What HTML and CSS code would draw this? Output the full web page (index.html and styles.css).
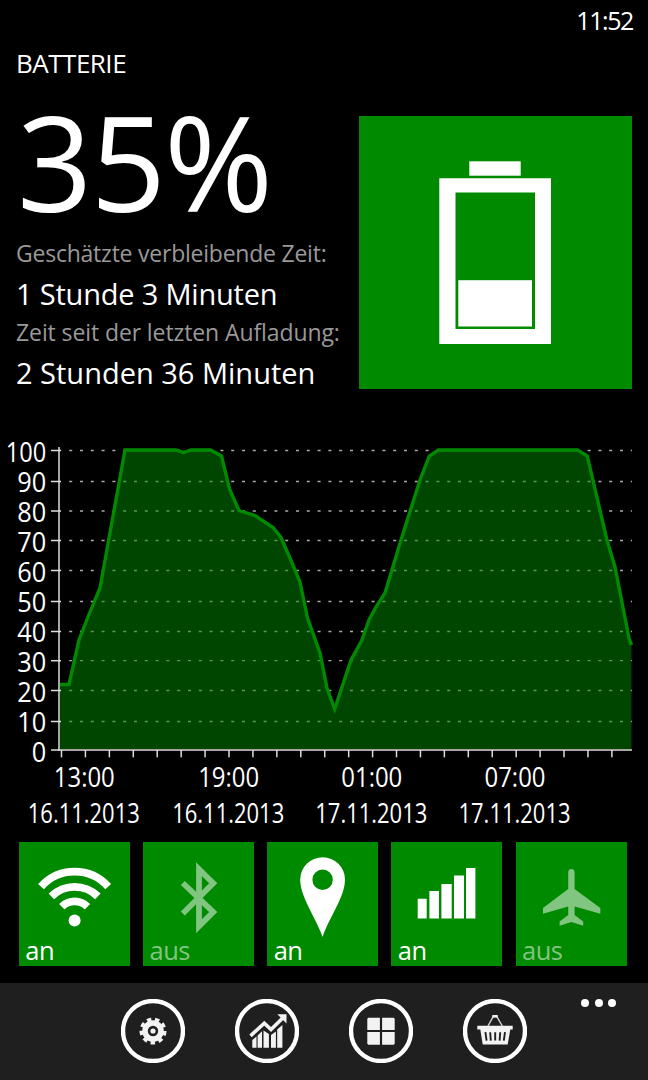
FILE: index.html
```html
<!DOCTYPE html>
<html lang="de">
<head>
  <meta charset="UTF-8" />
  <meta name="viewport" content="width=device-width, initial-scale=1.0"/>
  <title>Batterie</title>

  <link rel="stylesheet" href="styles.css">
</head>
<body>

  <!-- Status Bar -->
  <div class="status-bar"><span>11:52</span></div>

  <!-- Page Header -->
  <h1>BATTERIE</h1>

  <!-- Battery Overview -->
  <section class="overview">
    <div class="info">
      <div class="percent">35%</div>
      <p class="label label-remaining">Geschätzte verbleibende Zeit:</p>
      <p class="value value-remaining">1 Stunde 3 Minuten</p>
      <p class="label label-charge">Zeit seit der letzten Aufladung:</p>
      <p class="value value-charge">2 Stunden 36 Minuten</p>
    </div>
    <svg class="battery" viewBox="0 0 273 273">
      <rect x="110.3" y="45.3" width="51.4" height="14.4"/>
      <path fill-rule="evenodd" d="M80.3 62.3H192V228H80.3ZM96.5 76.5V213H176V76.5Z"/>
      <rect x="99.3" y="164.2" width="73.7" height="46.3"/>
    </svg>
  </section>

  <!-- History Chart -->
  <svg class="chart" viewBox="0 430 648 400">
    <g id="grid" class="grid"></g>
    <path class="area" id="area"/>
    <g class="axis">
      <path d="M59 447V751M51 750H632"/>
      <g id="ticks"></g>
    </g>
    <path class="line" id="line"/>
    <g id="labels" class="labels"></g>
  </svg>

  <!-- Quick Setting Tiles -->
  <div class="tiles">
    <a class="tile">
      <svg viewBox="0 0 111 124" class="stroked">
        <path stroke-width="7.8" d="M22 44.6A45.1 45.1 0 0 1 89.2 44.6M32.3 54.4A33.3 33.3 0 0 1 78.9 54.4M42.8 64.8A18 18 0 0 1 68.4 64.8"/>
        <circle class="dot" cx="55.6" cy="78.4" r="6"/>
      </svg>
      <span>an</span>
    </a>
    <a class="tile off">
      <svg viewBox="0 0 111 124" class="stroked">
        <path stroke-width="5.8" d="M39.8 41L70.2 70L56 84.3V27.2L70.2 41.3L39.8 71.5"/>
      </svg>
      <span>aus</span>
    </a>
    <a class="tile">
      <svg viewBox="0 0 111 124">
        <path fill-rule="evenodd" d="M55.6 95C49 76 33.2 55 33.2 37.6A22.4 22.4 0 0 1 78 37.6C78 55 62 76 55.6 95ZM55.6 27.5A10.2 10.2 0 1 0 55.6 47.9A10.2 10.2 0 1 0 55.6 27.5Z"/>
      </svg>
      <span>an</span>
    </a>
    <a class="tile">
      <svg viewBox="0 0 111 124">
        <path d="M26.7 56.7H35.7V76.4H26.7ZM38.4 49H48V76.4H38.4ZM50.4 42H60.7V76.4H50.4ZM63 33.4H73V76.4H63ZM75 26H84.4V76.4H75Z"/>
      </svg>
      <span>an</span>
    </a>
    <a class="tile off">
      <svg viewBox="0 0 111 124">
        <path d="M52.2 30Q52.5 27 55.4 27Q58.3 27 58.6 30V47L84.3 66V71.7L58.6 64.4V73L67.2 79.4V83.7L55.4 80L43.6 83.7V79.4L52.2 73V64.4L27 71.7V66L52.2 47Z"/>
      </svg>
      <span>aus</span>
    </a>
  </div>

  <!-- App Bar -->
  <nav class="app-bar">
    <svg viewBox="0 0 64 64">
      <circle class="ring" cx="32" cy="32" r="30"/>
      <circle class="gear" cx="32" cy="32" r="8"/>
      <circle class="teeth" cx="32" cy="32" r="11.4" pathLength="90"/>
      <circle cx="32" cy="32" r="2.6"/>
    </svg>
    <svg viewBox="0 0 64 64">
      <circle class="ring" cx="32" cy="32" r="30"/>
      <path d="M17.3 41L21.5 37.5V48.7H17.3ZM22.6 36.4L27 32.3V48.7H22.6ZM28.5 31.5L33.9 35V48.7H28.5ZM36 36L40.9 32.5V48.7H36ZM42.2 30.5L47.4 26V48.7H42.2Z"/>
      <path class="trend" d="M15.5 36.8L29.3 24.2L36 30.6L48 18.8"/>
      <path d="M42.3 15.3H51.5V24.4Z"/>
    </svg>
    <svg viewBox="0 0 64 64">
      <circle class="ring" cx="32" cy="32" r="30"/>
      <path d="M19.3 18.7H30.9V30.9H18.3V19.7ZM33.1 18.7H44.7L45.7 19.7V30.9H33.1ZM18.3 33.1H30.9V45.7H19.3L18.3 44.7ZM33.1 33.1H45.7V44.7L44.7 45.7H33.1Z"/>
    </svg>
    <svg viewBox="0 0 64 64">
      <circle class="ring" cx="32" cy="32" r="30"/>
      <path class="handle" d="M25 27L30.3 17.3H33.7L39.3 27"/>
      <rect x="29.3" y="16" width="5.4" height="2.6"/>
      <path d="M14.3 26.7H49.7V30.5H47.3L44.7 45.5H19.7L17.3 30.5H14.3Z"/>
      <path class="slots" d="M22.4 33.2L23.6 41.6M27.2 33.2L27.8 41.6M32.2 33.2V41.6M37.2 33.2L36.6 41.6M42 33.2L40.8 41.6"/>
    </svg>
    <div class="more"><i></i><i></i><i></i></div>
  </nav>

  <!-- Chart Script -->
  <script>
    const points = [
      [60, 684.5], [69, 684.5], [79, 640], [88, 617], [100, 588], [125, 450],
      [176, 450], [183.5, 452.5], [191, 450], [210.5, 450], [221.5, 456],
      [229.5, 489], [239, 510.5], [255, 515.5], [273, 527.5], [281, 537.5],
      [291.5, 561.5], [300, 582], [307.5, 618], [320, 653], [327, 688],
      [334.7, 709], [351, 660], [361.5, 641], [369, 620], [376, 607],
      [385, 593], [401, 540], [420, 480], [429.3, 456], [438.5, 450],
      [577.5, 450], [587.3, 456], [606.7, 539], [615, 567], [629, 638], [631.5, 645]
    ];
    const gridY = [450.5, 481.5, 511, 540.5, 570.5, 601.5, 631.5, 660.7, 690.5, 721.5];
    const times = [
      ["13:00", "16.11.2013", 84.3],
      ["19:00", "16.11.2013", 228.7],
      ["01:00", "17.11.2013", 371.8],
      ["07:00", "17.11.2013", 515]
    ];

    const path = "M" + points.map(p => p.join(" ")).join("L");
    document.getElementById("line").setAttribute("d", path);
    document.getElementById("area").setAttribute("d", path + "V749H60Z");

    let grid = "", ticks = "", labels = "";
    gridY.forEach(y => {
      grid += `<path d="M69.2 ${y}H632"/>`;
      ticks += `<path d="M51 ${y}H61"/>`;
    });
    for (let i = 0; i < 24; i++) {
      const x = 61.5 + i * 23.93;
      ticks += `<path d="M${x} 750V757.3"/>`;
    }
    for (let i = 0; i <= 10; i++) {
      const text = String(100 - i * 10);
      const width = i === 0 ? 40.5 : text.length * 14.5;
      labels += `<text x="46.3" y="${461.7 + i * 30}" text-anchor="end" textLength="${width}" lengthAdjust="spacingAndGlyphs">${text}</text>`;
    }
    times.forEach(([time, date, x]) => {
      labels += `<text x="${x}" y="786.6" text-anchor="middle" textLength="61" lengthAdjust="spacingAndGlyphs">${time}</text>`;
      labels += `<text x="${x - 0.5}" y="823" text-anchor="middle" textLength="112" lengthAdjust="spacingAndGlyphs">${date}</text>`;
    });

    document.getElementById("grid").innerHTML = grid;
    document.getElementById("ticks").innerHTML = ticks;
    document.getElementById("labels").innerHTML = labels;
  </script>

</body>
</html>
```
FILE: styles.css
```css
:root {
  --accent: #008a00;
  --bar-bg: #1f1f1f;
}

body {
  font-family: 'Open Sans', 'Noto Sans', sans-serif;
  background-color: #000;
  color: white;
  margin: 0;
  height: 1080px;
  display: flex;
  flex-direction: column;
  overflow: hidden;
}

.status-bar {
  height: 39px;
  line-height: 41px;
  padding-right: 15px;
  text-align: right;
  font-size: 25px;
  letter-spacing: -1.4px;
}

h1 {
  margin: 0 0 30px 16px;
  font-size: 26px;
  font-weight: normal;
  line-height: 48px;
  height: 47px;
  letter-spacing: -0.5px;
}

/* Battery overview */
.overview {
  display: flex;
  justify-content: space-between;
  height: 273px;
  padding: 0 16px;
}

.info {
  white-space: nowrap;
  width: 330px;
}

.percent {
  font-size: 132px;
  font-weight: 450;
  line-height: 90px;
  margin: 0 0 28px 1px;
  letter-spacing: -2px;
}

.info p {
  margin: 0;
  line-height: 39.7px;
}

.label {
  font-size: 23px;
  color: #999;
}

.label-remaining {
  letter-spacing: -0.23px;
}

.label-charge {
  letter-spacing: -0.1px;
}

.value {
  font-size: 29px;
}

.value-remaining {
  letter-spacing: -0.2px;
}

.battery {
  width: 273px;
  height: 273px;
  background-color: var(--accent);
  fill: white;
}

/* Chart */
.chart {
  display: block;
  width: 648px;
  height: 400px;
  margin-top: 41px;
}

.grid {
  stroke: #aaa;
  stroke-width: 1.3;
  stroke-dasharray: 3 7.8;
}

.area {
  fill: var(--accent);
  fill-opacity: 0.5;
}

.line {
  fill: none;
  stroke: var(--accent);
  stroke-width: 3.4;
}

.axis {
  stroke: #ddd;
  stroke-width: 1.5;
}

.labels {
  fill: white;
  font-size: 26.5px;
}

/* Tiles */
.tiles {
  display: flex;
  gap: 13.2px;
  margin: 12.3px 0 0 18.8px;
}

.tile {
  display: grid;
  width: 111px;
  height: 124px;
  background-color: var(--accent);
  color: white;
}

.tile svg,
.tile span {
  grid-area: 1 / 1;
}

.tile svg {
  width: 111px;
  height: 124px;
  fill: currentColor;
}

.tile svg.stroked {
  fill: none;
  stroke: currentColor;
}

.tile .dot {
  fill: currentColor;
  stroke: none;
}

.tile span {
  align-self: end;
  padding-left: 6.5px;
  font-size: 25.5px;
  line-height: 32px;
  letter-spacing: -0.5px;
}

.off {
  color: #80c580;
}

/* App bar */
.app-bar {
  position: relative;
  display: flex;
  gap: 50px;
  height: 80.7px;
  margin-top: auto;
  padding: 16.3px 0 0 121.2px;
  background-color: var(--bar-bg);
}

.app-bar svg {
  width: 64px;
  height: 64px;
  fill: #f2f2f2;
}

.app-bar .ring {
  fill: none;
  stroke: white;
  stroke-width: 4.4;
}

.app-bar .gear {
  fill: none;
  stroke: #f2f2f2;
  stroke-width: 5.6;
}

.app-bar .teeth {
  fill: none;
  stroke: #f2f2f2;
  stroke-width: 4.2;
  stroke-dasharray: 5.4 4.6;
}

.app-bar .trend {
  fill: none;
  stroke: #f2f2f2;
  stroke-width: 3.6;
}

.app-bar .handle {
  fill: none;
  stroke: #ccc;
  stroke-width: 1.5;
}

.slots {
  stroke: var(--bar-bg);
  stroke-width: 1.9;
}

.more {
  position: absolute;
  top: 15.7px;
  right: 32px;
  display: flex;
  gap: 5.5px;
}

.more i {
  width: 8px;
  height: 8px;
  border-radius: 50%;
  background-color: white;
}
```
